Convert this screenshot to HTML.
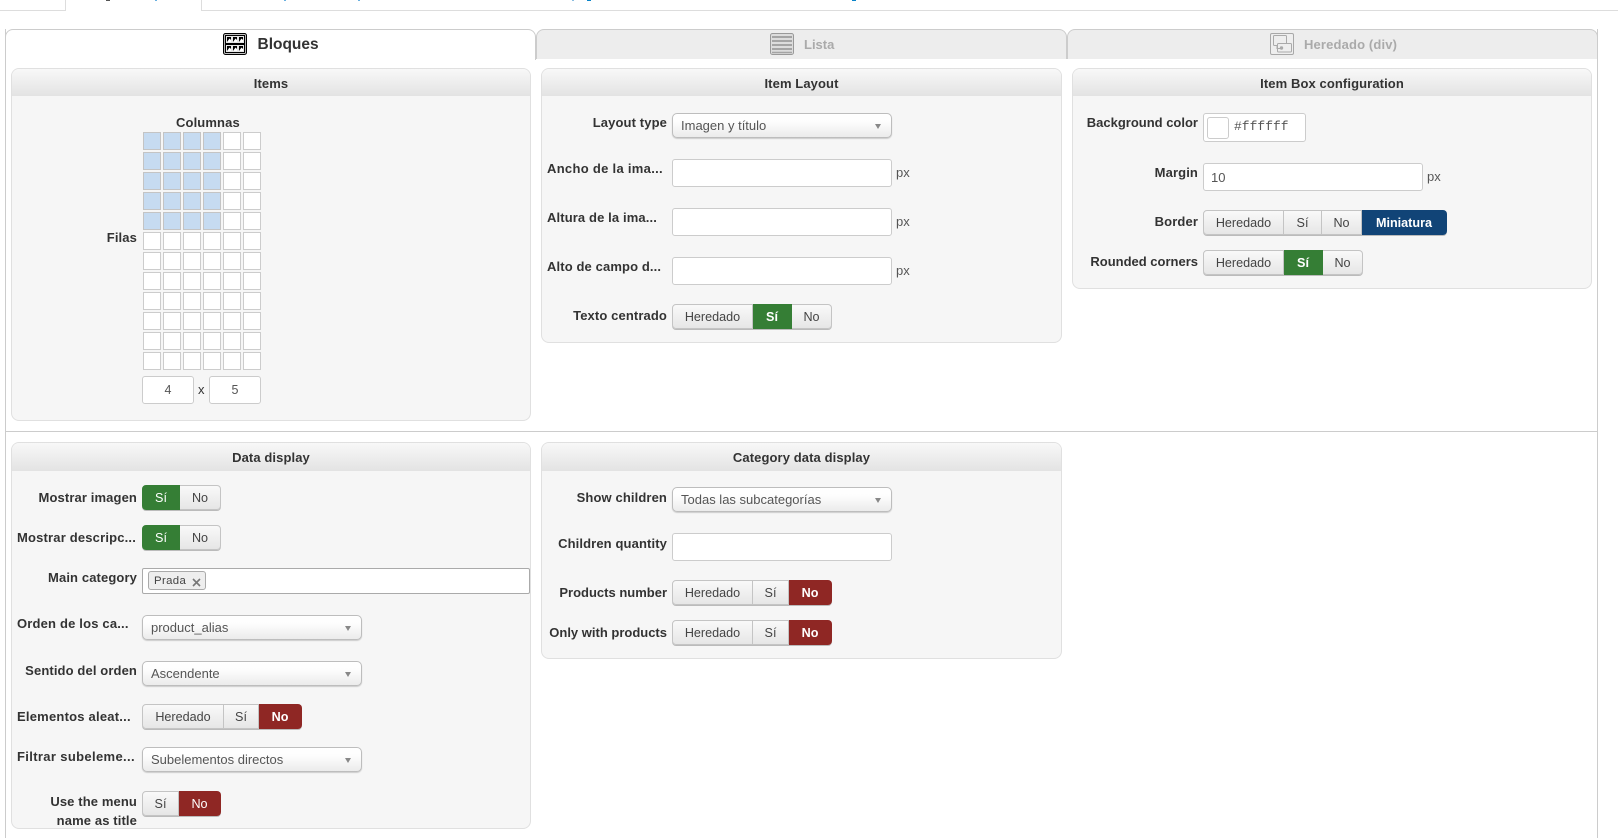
<!DOCTYPE html>
<html lang="es">
<head>
<meta charset="utf-8">
<title>Bloques</title>
<style>
html,body{margin:0;padding:0;background:#fff;width:1618px;height:838px;overflow:hidden}
body{position:relative;font-family:"Liberation Sans",Arial,sans-serif;font-size:13px;color:#333}
div,span{box-sizing:border-box}
.a{position:absolute}
.tab{position:absolute;top:29px;height:30px;border:1px solid #ccc;border-bottom:0;border-radius:8px 8px 0 0;background:#ededed}
.tt{position:absolute;font-weight:bold;white-space:nowrap;line-height:18px;height:18px;color:#aaa;top:36px}
.p{position:absolute;background:#f6f6f6;border:1px solid #e0e0e0;border-radius:8px;overflow:hidden}
.h{position:absolute;left:0;right:0;top:0;height:27px;background:linear-gradient(#f8f8f8,#e3e3e3);text-align:center;font-weight:bold;line-height:29px;color:#333;letter-spacing:.1px}
.l{position:absolute;font-weight:bold;white-space:nowrap;height:16px;line-height:16px;color:#333;letter-spacing:.12px}
.r{text-align:right}
.z{letter-spacing:0}
.b{position:absolute;height:25px;display:flex;border-radius:4px;box-shadow:0 1px 0 #bbb}
.b span{display:block;height:25px;line-height:25px;text-align:center;font-size:12.6px;color:#444;background:linear-gradient(#f9f9f9,#e6e6e6);border:1px solid #c4c4c4;border-left-width:0;flex:none}
.b span:first-child{border-left-width:1px;border-radius:4px 0 0 4px}
.b span:last-child{border-radius:0 4px 4px 0}
.b span.g{background:#357e35;border-color:#357e35;color:#fff}
.b span.d{background:#8f2724;border-color:#8f2724;color:#fff}
.b span.n{background:#114477;border-color:#114477;color:#fff;font-weight:bold}
.b span.w{font-weight:bold}
.s{position:absolute;width:220px;height:25px;border:1px solid #bdbdbd;border-radius:5px;background:linear-gradient(#fff,#fdfdfd 35%,#ebebeb);box-shadow:0 1px 1px #ccc;color:#555;padding-left:8px;line-height:24px;white-space:nowrap}
.s:after{content:"";position:absolute;right:10px;top:10px;border-left:3.5px solid transparent;border-right:3.5px solid transparent;border-top:5px solid #888}
.i{position:absolute;background:#fff;border:1px solid #ccc;border-radius:3px;color:#555}
.px{position:absolute;color:#555;height:16px;line-height:16px}
</style>
</head>
<body>
<!-- top strip -->
<div class="a" style="left:0;top:10px;width:66px;height:1px;background:#ddd"></div>
<div class="a" style="left:65px;top:0;width:1px;height:11px;background:#ddd"></div>
<div class="a" style="left:201px;top:0;width:1px;height:11px;background:#ddd"></div>
<div class="a" style="left:201px;top:10px;width:1417px;height:1px;background:#ddd"></div>
<div class="a" style="left:106px;top:0;width:4px;height:1px;background:#555"></div>
<div class="a" style="left:155px;top:0;width:2px;height:1px;background:#6ab0e0"></div>
<div class="a" style="left:284px;top:0;width:2px;height:1px;background:#6ab0e0"></div>
<div class="a" style="left:358px;top:0;width:2px;height:1px;background:#6ab0e0"></div>
<div class="a" style="left:572px;top:0;width:2px;height:1px;background:#8abde0"></div>
<div class="a" style="left:587px;top:0;width:4px;height:1px;background:#0a84c8"></div>
<div class="a" style="left:852px;top:0;width:4px;height:1px;background:#0a84c8"></div>

<!-- tabs -->
<div class="a" style="left:5px;top:29px;width:1593px;height:809px;border-left:1px solid #ccc;border-right:1px solid #ccc"></div>
<div class="tab" style="left:5px;width:531px;background:#fff;height:31px"></div>
<div class="tab" style="left:536px;width:531px"></div>
<div class="tab" style="left:1067px;width:531px"></div>
<div class="a" style="left:6px;top:431px;width:1591px;height:1px;background:#ccc"></div>

<svg class="a" style="left:223px;top:33px" width="24" height="22" viewBox="0 0 24 22">
<rect x=".5" y=".5" width="23" height="21" rx="2" fill="#000" stroke="#000"/>
<rect x="1.5" y="1.5" width="21" height="19" rx="1" fill="none" stroke="#fff" stroke-width=".7"/>
<g fill="#000" stroke="#fff" stroke-width=".9">
<rect x="3.5" y="3.5" width="5" height="6"/><rect x="9.5" y="3.5" width="5" height="6"/><rect x="15.5" y="3.5" width="5" height="6"/>
<rect x="3.5" y="12.5" width="5" height="6"/><rect x="9.5" y="12.5" width="5" height="6"/><rect x="15.5" y="12.5" width="5" height="6"/>
</g>
<g fill="#fff">
<path d="M4 9l2.5-3.5L8 7v2z"/><path d="M10 9l2.5-3.5L14 7v2z"/><path d="M16 9l2.5-3.5L20 7v2z"/>
<path d="M4 18l2.5-3.5L8 16v2z"/><path d="M10 18l2.5-3.5L14 16v2z"/><path d="M16 18l2.5-3.5L20 16v2z"/>
</g>
</svg>
<div class="tt" style="left:257.5px;font-size:15.5px;color:#333">Bloques</div>

<svg class="a" style="left:770px;top:33px" width="24" height="22" viewBox="0 0 24 22">
<rect x=".5" y=".5" width="23" height="21" rx="2" fill="#dcdcdc" stroke="#999"/>
<g stroke="#a4a4a4" stroke-width="2"><path d="M2 4h20M2 8h20M2 12h20M2 16h20"/></g>
<path d="M2 19.5h20" stroke="#a4a4a4" stroke-width="1.4"/>
</svg>
<div class="tt" style="left:804px">Lista</div>

<svg class="a" style="left:1270px;top:33px" width="24" height="22" viewBox="0 0 24 22" fill="none" stroke="#aaa">
<rect x=".5" y=".5" width="23" height="21" rx="1.5" fill="#eee" stroke="#a8a8a8"/>
<rect x="3.5" y="2.5" width="13" height="10" rx="1"/>
<rect x="7.5" y="10.5" width="14" height="8.5" rx="1" fill="#eee"/>
<path d="M7 12.5v3h3"/>
<circle cx="11.5" cy="15" r="1.2" fill="#aaa"/>
</svg>
<div class="tt" style="left:1304px;letter-spacing:.15px">Heredado (div)</div>

<!-- Items -->
<div class="p" style="left:11px;top:68px;width:520px;height:353px"><div class="h">Items</div></div>
<div class="l" style="left:176px;top:115px">Columnas</div>
<div class="l r" style="left:60px;width:77px;top:230px">Filas</div>
<svg class="a" style="left:143px;top:132px" width="118" height="238" viewBox="0 0 118 238">
<defs>
<pattern id="c" width="20" height="20" patternUnits="userSpaceOnUse"><rect x=".5" y=".5" width="17" height="17" fill="#fff" stroke="#ccc"/></pattern>
<pattern id="e" width="20" height="20" patternUnits="userSpaceOnUse"><rect x=".5" y=".5" width="17" height="17" fill="#c6dbf1" stroke="#c4c4c4"/></pattern>
</defs>
<rect width="118" height="238" fill="url(#c)"/>
<rect width="78" height="98" fill="url(#e)"/>
</svg>
<div class="i" style="left:142px;top:376px;width:52px;height:28px;text-align:center;line-height:26px;font-size:12.5px">4</div>
<div class="a" style="left:198px;top:382px;height:16px;line-height:16px">x</div>
<div class="i" style="left:209px;top:376px;width:52px;height:28px;text-align:center;line-height:26px;font-size:12.5px">5</div>

<!-- Item Layout -->
<div class="p" style="left:541px;top:68px;width:521px;height:275px"><div class="h">Item Layout</div></div>
<div class="l r" style="left:540px;width:127px;top:115px">Layout type</div>
<div class="s" style="left:672px;top:113px">Imagen y título</div>
<div class="l" style="left:547px;top:161px;letter-spacing:.3px">Ancho de la ima...</div>
<div class="i" style="left:672px;top:159px;width:220px;height:28px"></div>
<div class="px" style="left:896px;top:165px">px</div>
<div class="l" style="left:547px;top:210px">Altura de la ima...</div>
<div class="i" style="left:672px;top:208px;width:220px;height:28px"></div>
<div class="px" style="left:896px;top:214px">px</div>
<div class="l" style="left:547px;top:259px">Alto de campo d...</div>
<div class="i" style="left:672px;top:257px;width:220px;height:28px"></div>
<div class="px" style="left:896px;top:263px">px</div>
<div class="l r" style="left:540px;width:127px;top:308px">Texto centrado</div>
<div class="b" style="left:672px;top:304px"><span style="width:81px">Heredado</span><span class="g w" style="width:39px">Sí</span><span style="width:40px">No</span></div>

<!-- Item box -->
<div class="p" style="left:1072px;top:68px;width:520px;height:221px"><div class="h">Item Box configuration</div></div>
<div class="l r z" style="left:1060px;width:138px;top:115px">Background color</div>
<div class="i" style="left:1203px;top:113px;width:103px;height:29px"></div>
<div class="i" style="left:1207px;top:117px;width:22px;height:22px"></div>
<div class="a" style="left:1234px;top:119px;height:16px;line-height:16px;font-family:'Liberation Mono',monospace;font-size:13px;color:#555">#ffffff</div>
<div class="l r" style="left:1060px;width:138px;top:165px">Margin</div>
<div class="i" style="left:1203px;top:163px;width:220px;height:28px;padding-left:7px;line-height:27px">10</div>
<div class="px" style="left:1427px;top:169px">px</div>
<div class="l r" style="left:1060px;width:138px;top:214px">Border</div>
<div class="b" style="left:1203px;top:210px"><span style="width:81px">Heredado</span><span style="width:38px">Sí</span><span style="width:40px">No</span><span class="n" style="width:85px">Miniatura</span></div>
<div class="l r z" style="left:1060px;width:138px;top:254px">Rounded corners</div>
<div class="b" style="left:1203px;top:250px"><span style="width:81px">Heredado</span><span class="g w" style="width:39px">Sí</span><span style="width:40px">No</span></div>

<!-- Data display -->
<div class="p" style="left:11px;top:442px;width:520px;height:387px"><div class="h" style="height:28px">Data display</div></div>
<div class="l r" style="left:17px;width:120px;top:490px">Mostrar imagen</div>
<div class="b" style="left:142px;top:485px"><span class="g" style="width:38px">Sí</span><span style="width:41px">No</span></div>
<div class="l" style="left:17px;top:530px;letter-spacing:.18px">Mostrar descripc...</div>
<div class="b" style="left:142px;top:525px"><span class="g" style="width:38px">Sí</span><span style="width:41px">No</span></div>
<div class="l r" style="left:17px;width:120px;top:570px">Main category</div>
<div class="a" style="left:142px;top:568px;width:388px;height:26px;background:#fff;border:1px solid #aaa;border-radius:2px"></div>
<div class="a" style="left:148px;top:571px;width:58px;height:19px;background:#eee;border:1px solid #aaa;border-radius:3px;font-size:11.4px;line-height:19px;padding-left:5px;color:#444;letter-spacing:.35px">Prada</div>
<svg class="a" style="left:192px;top:578px" width="9" height="9" viewBox="0 0 9 9"><path d="M1 1l7 7M8 1l-7 7" stroke="#777" stroke-width="1.6"/></svg>
<div class="l" style="left:17px;top:616px;letter-spacing:.18px">Orden de los ca...</div>
<div class="s" style="left:142px;top:615px">product_alias</div>
<div class="l r" style="left:17px;width:120px;top:663px">Sentido del orden</div>
<div class="s" style="left:142px;top:661px">Ascendente</div>
<div class="l" style="left:17px;top:709px;letter-spacing:.22px">Elementos aleat...</div>
<div class="b" style="left:142px;top:704px"><span style="width:82px">Heredado</span><span style="width:35px">Sí</span><span class="d w" style="width:43px">No</span></div>
<div class="l" style="left:17px;top:749px;letter-spacing:.35px">Filtrar subeleme...</div>
<div class="s" style="left:142px;top:747px">Subelementos directos</div>
<div class="l r" style="left:17px;width:120px;top:794px">Use the menu</div>
<div class="l r" style="left:17px;width:120px;top:813px">name as title</div>
<div class="b" style="left:142px;top:791px"><span style="width:37px">Sí</span><span class="d" style="width:42px">No</span></div>

<!-- Category data display -->
<div class="p" style="left:541px;top:442px;width:521px;height:217px"><div class="h" style="height:28px">Category data display</div></div>
<div class="l r" style="left:540px;width:127px;top:490px">Show children</div>
<div class="s" style="left:672px;top:487px">Todas las subcategorías</div>
<div class="l r" style="left:540px;width:127px;top:536px">Children quantity</div>
<div class="i" style="left:672px;top:533px;width:220px;height:28px"></div>
<div class="l r z" style="left:540px;width:127px;top:585px">Products number</div>
<div class="b" style="left:672px;top:580px"><span style="width:81px">Heredado</span><span style="width:36px">Sí</span><span class="d w" style="width:43px">No</span></div>
<div class="l r z" style="left:540px;width:127px;top:625px">Only with products</div>
<div class="b" style="left:672px;top:620px"><span style="width:81px">Heredado</span><span style="width:36px">Sí</span><span class="d w" style="width:43px">No</span></div>
</body>
</html>
